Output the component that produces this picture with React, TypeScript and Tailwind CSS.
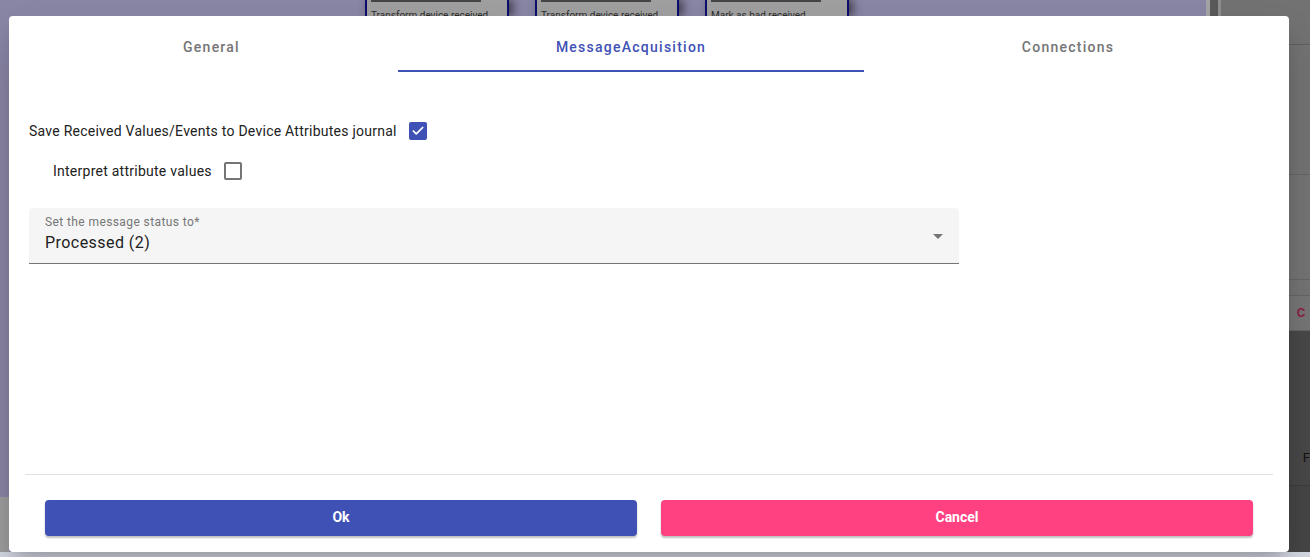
import { Check } from "lucide-react";

const TABS = [
  { label: "General", width: "w-[389px] pl-[16px]", active: false },
  { label: "MessageAcquisition", width: "w-[466px]", active: true },
  { label: "Connections", width: "w-[408px]", active: false },
];

const BG_CARDS = [
  { left: "left-[365px]", text: "Transform device received" },
  { left: "left-[535px]", text: "Transform device received" },
  { left: "left-[705px]", text: "Mark as bad received" },
];

function Backdrop() {
  return (
    <>
      {/* Flow cards peeking above the dialog */}
      {BG_CARDS.map((c) => (
        <div
          key={c.left}
          className={`absolute ${c.left} top-0 h-[16px] w-[144px] border-x-2 border-[#0d0d6b] bg-[#9f9f9f] px-1 shadow-[4px_0_10px_rgba(0,0,0,0.55)]`}
        >
          <div className="h-[2px] w-[110px] bg-[#444]" />
          <div className="pt-[8px] text-[10px] leading-[12px] text-[#2c2c2c]">{c.text}</div>
        </div>
      ))}

      {/* Right side panel */}
      <div className="absolute left-[1206px] top-0 flex h-[552px] w-[104px]">
        <div className="w-[5px] bg-[#a3a3a3]" />
        <div className="w-[11px] bg-[#595959]" />
        <div className="w-[3px] bg-[#8e8e8e]" />
        <div className="flex flex-1 flex-col">
          <div className="h-[45px] border-b border-[#5f5f5f] bg-[#727272]" />
          <div className="h-[130px] border-b border-[#666] bg-[#737373]" />
          <div className="h-[105px] border-b border-[#666] bg-[#747474]" />
          <div className="h-[16px] border-b border-[#666] bg-[#747474]" />
          <div className="flex h-[35px] items-center border-b border-[#666] bg-[#767676] pl-[76px] text-[13px] font-bold text-[#8c1f4a]">
            C
          </div>
          <div className="h-[155px] border-b border-[#3c3c3c] bg-[#484848]">
            <div className="pl-[82px] pt-[117px] text-[13px] text-[#111]">F</div>
          </div>
          <div className="flex-1 bg-[#464646]" />
        </div>
      </div>

      {/* Bottom strip */}
      <div className="absolute bottom-0 left-0 h-[5px] w-full bg-[#d6dae4]" />
      <div className="absolute left-0 top-[497px] h-[55px] w-[9px] bg-[#9e9e9e]" />
    </>
  );
}

export default function App() {
  return (
    <div className="relative h-[557px] w-[1310px] overflow-hidden bg-[#8985a5] font-['Roboto',sans-serif]">
      <Backdrop />

      {/* Dialog */}
      <div className="absolute left-[9px] top-[16px] flex h-[536px] w-[1280px] flex-col rounded-[4px] bg-white shadow-[0_11px_15px_-7px_rgba(0,0,0,0.2),0_24px_38px_3px_rgba(0,0,0,0.14)]">
        {/* Tabs */}
        <div className="flex h-[56px]">
          {TABS.map((tab) => (
            <div
              key={tab.label}
              className={`flex ${tab.width} items-center justify-center border-b-2 pt-[8px] text-[14px] font-medium tracking-[1.25px] ${
                tab.active ? "border-[#3f51b5] text-[#3f51b5]" : "border-transparent text-[#757575]"
              }`}
            >
              {tab.label}
            </div>
          ))}
        </div>

        {/* Body */}
        <div className="flex-1 px-[20px] pt-[48px]">
          <label className="flex h-[22px] items-center gap-[12px] text-[14px] tracking-[0.25px] text-[#212121]">
            Save Received Values/Events to Device Attributes journal
            <span className="flex h-[18px] w-[18px] items-center justify-center rounded-[2px] bg-[#3f51b5]">
              <Check size={14} strokeWidth={3} className="text-white" />
            </span>
          </label>

          <label className="mt-[18px] flex h-[22px] items-center gap-[12px] pl-[24px] text-[14px] tracking-[0.25px] text-[#212121]">
            Interpret attribute values
            <span className="h-[18px] w-[18px] rounded-[2px] border-2 border-[#757575]" />
          </label>

          <div className="mt-[26px] flex h-[56px] w-[930px] items-center justify-between rounded-t-[4px] border-b border-[#757575] bg-[#f5f5f5] px-[16px]">
            <div className="flex flex-col self-start pt-[7px]">
              <span className="text-[12px] leading-[14px] tracking-[0.4px] text-[#757575]">Set the message status to*</span>
              <span className="mt-[4px] text-[16px] leading-[20px] tracking-[0.45px] text-[#212121]">Processed (2)</span>
            </div>
            <svg width="10" height="5" viewBox="0 0 10 5" className="mt-[2px]">
              <path d="M0 0l5 5 5-5z" fill="#757575" />
            </svg>
          </div>
        </div>

        {/* Footer */}
        <div className="mx-[16px] border-t border-[#e0e0e0]" />
        <div className="flex h-[77px] items-center gap-[24px] px-[36px] pt-[8px]">
          <button
            type="button"
            className="h-[36px] flex-1 rounded-[4px] bg-[#3f51b5] text-[14px] font-bold text-white shadow-[0_2px_2px_rgba(0,0,0,0.25)]"
          >
            Ok
          </button>
          <button
            type="button"
            className="h-[36px] flex-1 rounded-[4px] bg-[#ff4081] text-[14px] font-bold text-white shadow-[0_2px_2px_rgba(0,0,0,0.25)]"
          >
            Cancel
          </button>
        </div>
      </div>
    </div>
  );
}
